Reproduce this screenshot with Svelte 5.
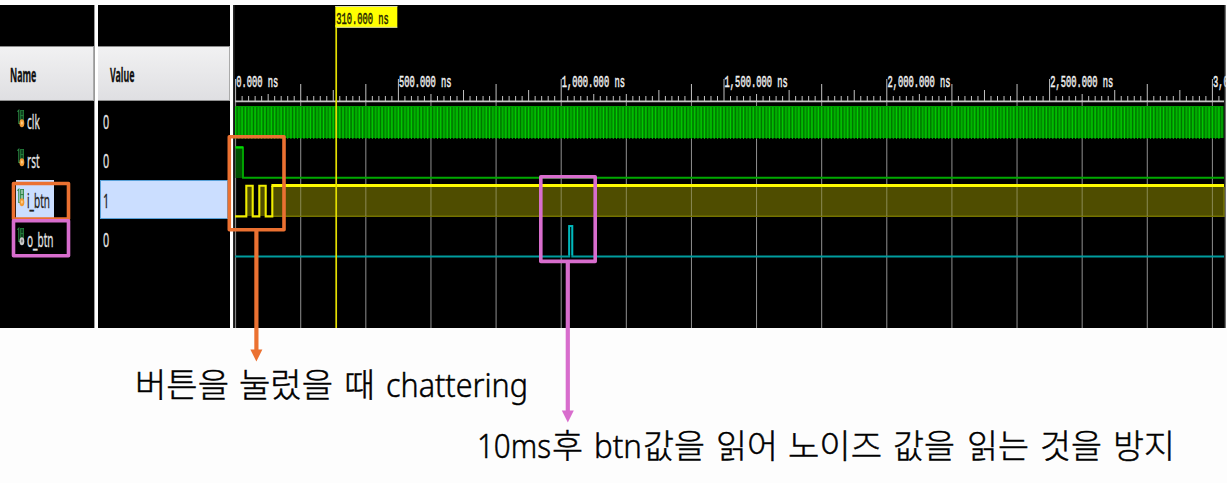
<script>
  const signals = [
    { name: 'clk', value: '0', kind: 'in' },
    { name: 'rst', value: '0', kind: 'in' },
    { name: 'i_btn', value: '1', kind: 'in', selected: true },
    { name: 'o_btn', value: '0', kind: 'out' }
  ];

  // Time scale: nanoseconds to pixels inside the waveform pane
  const origin = 2.6;
  const scale = 0.3256;
  const end = 991;
  const px = (ns) => origin + ns * scale;

  const gridLines = Array.from({ length: 16 }, (_, i) => px(i * 200));
  const labels = [0, 500, 1000, 1500, 2000, 2500, 3000].map((ns) => ({
    x: px(ns),
    text: ns.toLocaleString('en-US') + '.000 ns'
  }));

  function tickTop(ns) {
    if (ns % 500 === 0) return 74;
    if (ns % 100 !== 0) return 91;
    if (ns === 1200) return 89;
    const r = (ns % 500) / 100;
    if (ns % 1000 < 500) return [74, 89, 79, 85, 79][r];
    return [74, 89, 85, 79, 85][r];
  }
  const ticks = Array.from({ length: 152 }, (_, i) => ({ x: px(i * 20), top: tickTop(i * 20) }));

  const clock = Array.from({ length: 303 }, (_, i) => ({ x: px(i * 10), wide: i % 3 !== 1 })).filter((c) => c.x < end - 1);

  const captions = [
    { y: 397, words: [['버튼을', 135, 94], ['눌렀을', 239, 94], ['때', 344, 31], ['chattering', 386, 142]] },
    {
      y: 458,
      words: [
        ['10ms', 477, 74], ['후', 552, 31], ['btn', 594, 48], ['값을', 643, 62], ['읽어', 716, 62], ['노이즈', 788, 94],
        ['값을', 893, 62], ['읽는', 967, 62], ['것을', 1040, 62], ['방지', 1113, 62]
      ]
    }
  ];
</script>

<main>
  <section class="viewer">
    <div class="column names">
      <header><span class="squeeze">Name</span></header>
      {#each signals as s}
        <div class="row">
          <div class="signal" class:selected={s.selected}>
            <svg class="icon" width="8" height="20" viewBox="0 0 8 20">
              <path d="M0.3 2.6L1.8 1.2V14.5H4" fill="none" stroke="#2b8a43" stroke-width="1.1" />
              <rect x="3.6" y="1.4" width="3" height="11.6" fill={s.selected ? '#8cc0a0' : '#0f4420'} stroke="#25813c" stroke-width=".8" />
              <path d="M3.6 6.6H6.6" stroke="#25813c" stroke-width="1" />
              <ellipse cx="4.9" cy="14.3" rx="2.4" ry="4" fill={s.kind === 'in' ? '#f29a35' : '#c9c9c9'} />
              <ellipse cx="4.9" cy="14" rx="1" ry="1.8" fill={s.kind === 'in' ? '#ffd08a' : '#777'} />
            </svg>
            <span class="squeeze">{s.name}</span>
          </div>
        </div>
      {/each}
    </div>
    <div class="divider"></div>
    <div class="column values">
      <header><span class="squeeze">Value</span></header>
      {#each signals as s}
        <div class="row">
          <div class="value" class:selected={s.selected}><span class="squeeze">{s.value}</span></div>
        </div>
      {/each}
    </div>
    <div class="splitter"></div>
    <svg class="wave" width="994" height="323" viewBox="0 0 994 323">
      <rect width="994" height="323" fill="#000" />
      <rect x="0" width="1.6" height="323" fill="#292929" />
      {#each gridLines as x}
        <path d="M{x} 95V323" stroke="#909090" />
      {/each}
      {#each ticks as t}
        <path d="M{t.x} {t.top}V97" stroke="#c2c2c2" />
      {/each}
      <path d="M2 96.3H{end}" stroke="#c6c6c6" stroke-width="1.7" />
      {#each labels as l}
        <text class="time" x={l.x + 0.6} y="82" textLength={l.text.length * 5.26} lengthAdjust="spacingAndGlyphs">{l.text}</text>
      {/each}

      <rect x="2.5" y="101" width={end - 3} height="32" fill="#009c00" />
      {#each clock as c}
        <path d="M{c.x} 102V134" stroke={c.wide ? '#00d400' : '#00b900'} stroke-width=".9" />
        <path d="M{c.x + 1.6} 102V133" stroke={c.wide ? '#005f00' : '#008000'} stroke-width=".7" />
      {/each}

      <rect x="2.5" y="143" width="7.5" height="30" fill="#005000" />
      <path d="M2.5 142.4H10V172.7H{end}" fill="none" stroke="#00a800" stroke-width="1.9" />
      <path d="M2.5 142.4H10" stroke="#00dc00" stroke-width="2.2" />

      <g fill="#4f4d00">
        <rect x="13.5" y="181" width="6" height="30" />
        <rect x="26.5" y="181" width="6" height="30" />
        <rect x="39.5" y="181" width={end - 39.5} height="30" />
      </g>
      <path d="M39 211.3H{end}V182" fill="none" stroke="#747200" stroke-width="1.6" />
      <g stroke="#8b8a55">
        {#each gridLines.slice(1) as x}
          <path d="M{x} 182V211" />
        {/each}
      </g>
      <path d="M2 211.4H13.3V180.7H19.7V211.4H26.3V180.7H32.7V211.4H39.3V180.7" fill="none" stroke="#f0ed00" stroke-width="2.1" />
      <path d="M38.4 180.5H{end}" stroke="#fffb00" stroke-width="3.1" />

      <path d="M2 251.5H336.2V221H339.3V251.5H{end}" fill="none" stroke="#009c9e" stroke-width="2" />
      <path d="M336.2 250V221H339.3V250" fill="none" stroke="#00b9bd" stroke-width="1.5" />

      <path d="M103.2 20V323" stroke="#e4df00" stroke-width="1.7" />
      <rect x="102.3" y="1" width="62" height="21.5" fill="#ffff00" />
      <path d="M102.3 1.5H164.3M164.3 22.3H103" stroke="#d9d9a5" />
      <text class="time cursor" x="103.2" y="19" textLength="52.6" lengthAdjust="spacingAndGlyphs">310.000 ns</text>
      <rect x="991.5" width="1.2" height="323" fill="#8d8d8d" opacity=".5" />
      <rect x="992.7" width="2" height="323" fill="#fdfdfd" />
    </svg>
  </section>

  <svg class="notes" width="1227" height="483" viewBox="0 0 1227 483">
    <g fill="none" stroke="#eb7131" stroke-width="3.6" stroke-linejoin="round">
      <rect x="13.5" y="183.5" width="55" height="35.5" />
      <rect x="229.3" y="136.8" width="54.7" height="93" />
      <path d="M256.4 230V351" stroke-width="4.2" />
    </g>
    <path d="M250.4 349.5H262.4L256.4 361.5Z" fill="#eb7131" />
    <g fill="none" stroke="#d86dcd" stroke-width="3.6" stroke-linejoin="round">
      <rect x="13.5" y="220.8" width="55" height="35" />
      <rect x="540.8" y="176.8" width="54.4" height="84.6" />
      <path d="M567.8 262V412" stroke-width="4.2" />
    </g>
    <path d="M561.8 410.5H573.8L567.8 422.5Z" fill="#d86dcd" />
    {#each captions as line}
      {#each line.words as [word, x, width]}
        <text class="caption" {x} y={line.y} textLength={width} lengthAdjust="spacingAndGlyphs">{word}</text>
      {/each}
    {/each}
  </svg>
</main>

<style>
  :global(body) {
    background: #fdfdfd;
  }
  main {
    position: relative;
    width: 1227px;
    height: 483px;
    overflow: hidden;
    box-sizing: border-box;
    padding-top: 5px;
    font-family: 'Noto Sans', sans-serif;
  }
  .viewer {
    display: flex;
    height: 323px;
    background: #000;
  }
  .column {
    display: flex;
    flex-direction: column;
    padding-top: 41px;
    box-sizing: border-box;
  }
  .names {
    width: 94px;
  }
  .values {
    width: 132px;
  }
  header {
    height: 55px;
    box-sizing: border-box;
    display: flex;
    align-items: center;
    padding: 2px 0 0 10px;
    border-top: 1px solid #8a8a8a;
    border-bottom: 1px solid #909090;
    border-right: 1px solid #aaa;
    background: linear-gradient(#f1f1f2, #dfdfe2);
    color: #111;
    font-size: 19px;
    font-weight: 700;
  }
  .values header {
    padding-left: 12px;
  }
  .squeeze {
    display: inline-block;
    transform: scaleX(0.54);
    transform-origin: left center;
    white-space: nowrap;
    -webkit-text-stroke: 0.3px currentColor;
  }
  header .squeeze {
    transform: scaleX(0.465);
  }
  .row {
    height: 39.5px;
    display: flex;
    color: #e3e3e3;
    font-size: 20px;
  }
  .signal {
    width: 38px;
    height: 39px;
    margin-left: 16px;
    display: flex;
    align-items: center;
    gap: 2px;
  }
  .signal .icon {
    flex: none;
    margin: -4px 0 0 1px;
  }
  .signal .squeeze {
    width: 20px;
    transform: scaleX(0.5);
    padding-top: 1px;
  }
  .value {
    width: 128px;
    height: 39px;
    margin-left: 2px;
    padding: 1px 0 0 2px;
    box-sizing: border-box;
    border: 1px solid transparent;
    display: flex;
    align-items: center;
  }
  .selected {
    background: #cbdeff;
    color: #222;
  }
  .value.selected {
    border-color: #57a0d8;
  }
  .divider {
    width: 3px;
    background: #fff;
    border-left: 1px solid #999;
  }
  .splitter {
    width: 3px;
    background: #fff;
  }
  .wave {
    flex: none;
    display: block;
  }
  .time {
    font: 17px 'Liberation Mono', monospace;
    fill: #f2f2f2;
    stroke: #f2f2f2;
    stroke-width: 0.5;
  }
  .cursor {
    fill: #222200;
    stroke: #222200;
  }
  .notes {
    position: absolute;
    left: 0;
    top: 0;
  }
  .caption {
    font: 33px 'Noto Sans', 'Noto Sans CJK KR', sans-serif;
    font-weight: 300;
    fill: #000;
    stroke: #000;
    stroke-width: 0.45;
  }
</style>
